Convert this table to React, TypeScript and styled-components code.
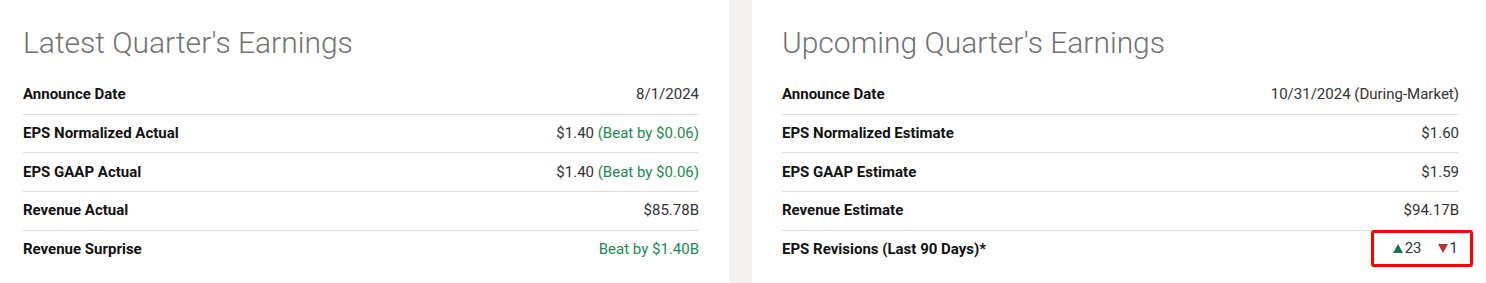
import React from 'react'
import styled, { createGlobalStyle } from 'styled-components'

const GlobalStyle = createGlobalStyle`
    html, body {
        margin: 0;
        padding: 0;
        background: #ffffff;
        font-family: Roboto, "Noto Sans", Arial, sans-serif;
    }
`

const Page = styled.div`
    display: grid;
    grid-template-columns: 729px 23px 1fr;
    width: 1486px;
    height: 283px;
    background: #ffffff;
`

const Divider = styled.div`
    background: #f4f1f0;
`

const Card = styled.section<{ $left: number; $right: number }>`
    padding: 25px ${p => p.$right}px 0 ${p => p.$left}px;
`

const Title = styled.h2`
    margin: 0 0 15px;
    font-size: 30px;
    line-height: 36px;
    font-weight: 300;
    color: #727272;
`

const Table = styled.div`
    display: flex;
    flex-direction: column;
`

const Row = styled.div`
    display: flex;
    align-items: center;
    justify-content: space-between;
    height: 37.67px;
    border-bottom: 1px solid #dcdcdc;
    font-size: 15px;
    line-height: 18px;

    &:last-child {
        border-bottom: none;
    }
`

const Label = styled.span`
    font-weight: 700;
    color: #111111;
    margin-top: -1px;
`

const Value = styled.span`
    color: #333333;
    margin-top: -1px;
`

const Good = styled.span`
    color: #1d8a4f;
`

const Revisions = styled.span`
    display: inline-flex;
    align-items: center;
    gap: 16px;
    padding: 6px 12px 7px 19px;
    margin: 0 -14px 1px 0;
    border: 3px solid #ff0000;
    border-radius: 3px;
    color: #333333;
`

const Count = styled.span`
    display: inline-flex;
    align-items: baseline;
    gap: 2px;
`

const Triangle = ({ up }: { up?: boolean }) => (
    <svg width="10" height="9" viewBox="0 0 10 9">
        {up
            ? <polygon points="5,0 10,9 0,9" fill="#18774a" />
            : <polygon points="0,0 10,0 5,9" fill="#b83434" />}
    </svg>
)

const latest = [
    { label: 'Announce Date', value: <Value>8/1/2024</Value> },
    { label: 'EPS Normalized Actual', value: <Value>$1.40 <Good>(Beat by $0.06)</Good></Value> },
    { label: 'EPS GAAP Actual', value: <Value>$1.40 <Good>(Beat by $0.06)</Good></Value> },
    { label: 'Revenue Actual', value: <Value>$85.78B</Value> },
    { label: 'Revenue Surprise', value: <Value><Good>Beat by $1.40B</Good></Value> },
]

const upcoming = [
    { label: 'Announce Date', value: <Value>10/31/2024 (During-Market)</Value> },
    { label: 'EPS Normalized Estimate', value: <Value>$1.60</Value> },
    { label: 'EPS GAAP Estimate', value: <Value>$1.59</Value> },
    { label: 'Revenue Estimate', value: <Value>$94.17B</Value> },
    {
        label: 'EPS Revisions (Last 90 Days)*',
        value: (
            <Revisions>
                <Count><Triangle up />23</Count>
                <Count><Triangle />1</Count>
            </Revisions>
        ),
    },
]

const EarningsCard = ({ title, rows, left, right }) => (
    <Card $left={left} $right={right}>
        <Title>{title}</Title>
        <Table>
            {rows.map(r => (
                <Row key={r.label}>
                    <Label>{r.label}</Label>
                    {r.value}
                </Row>
            ))}
        </Table>
    </Card>
)

const App = () => (
    <>
        <GlobalStyle />
        <Page>
            <EarningsCard title="Latest Quarter's Earnings" rows={latest} left={23} right={30} />
            <Divider />
            <EarningsCard title="Upcoming Quarter's Earnings" rows={upcoming} left={30} right={27} />
        </Page>
    </>
)

export default App
